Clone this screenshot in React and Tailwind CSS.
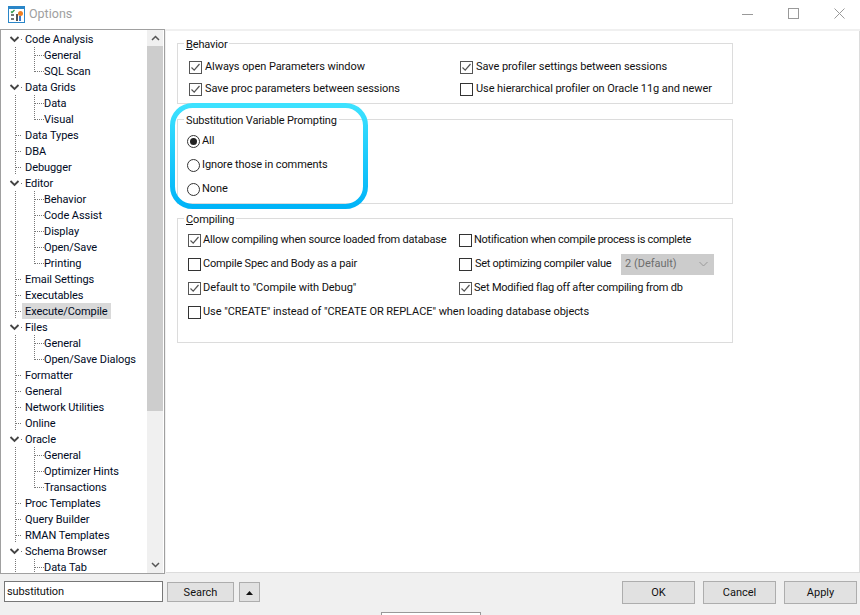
import React from 'react';

const font = { fontFamily: 'Roboto, sans-serif' };

// [label, level, flags] p = parent with chevron, l = last child of its parent
const tree = [
  ['Code Analysis', 0, 'p'],
  ['General', 1, ''],
  ['SQL Scan', 1, 'l'],
  ['Data Grids', 0, 'p'],
  ['Data', 1, ''],
  ['Visual', 1, 'l'],
  ['Data Types', 0, ''],
  ['DBA', 0, ''],
  ['Debugger', 0, ''],
  ['Editor', 0, 'p'],
  ['Behavior', 1, ''],
  ['Code Assist', 1, ''],
  ['Display', 1, ''],
  ['Open/Save', 1, ''],
  ['Printing', 1, 'l'],
  ['Email Settings', 0, ''],
  ['Executables', 0, ''],
  ['Execute/Compile', 0, 's'],
  ['Files', 0, 'p'],
  ['General', 1, ''],
  ['Open/Save Dialogs', 1, 'l'],
  ['Formatter', 0, ''],
  ['General', 0, ''],
  ['Network Utilities', 0, ''],
  ['Online', 0, ''],
  ['Oracle', 0, 'p'],
  ['General', 1, ''],
  ['Optimizer Hints', 1, ''],
  ['Transactions', 1, 'l'],
  ['Proc Templates', 0, ''],
  ['Query Builder', 0, ''],
  ['RMAN Templates', 0, ''],
  ['Schema Browser', 0, 'p'],
  ['Data Tab', 1, ''],
];

function TreeRow({ label, level, flags }) {
  const parent = flags.includes('p');
  const last = flags.includes('l');
  const selected = flags.includes('s');
  return (
    <div className="flex h-4 items-center">
      <svg width={level ? 43 : 21} height="16" className="shrink-0" shapeRendering="crispEdges">
        {!parent && <line x1="14.5" y1="0" x2="14.5" y2="16" stroke="#777" strokeDasharray="1 1" />}
        {level === 0 && !parent && <line x1="15" y1="8.5" x2="21" y2="8.5" stroke="#777" strokeDasharray="1 1" />}
        {parent && (
          <>
            <polyline points="9.5,6 13.5,10 17.5,6" fill="none" stroke="#444" strokeWidth="1.8" shapeRendering="auto" />
            <rect x="20" y="8" width="1" height="1" fill="#777" />
          </>
        )}
        {level === 1 && (
          <>
            <line x1="33.5" y1="0" x2="33.5" y2={last ? 9 : 16} stroke="#777" strokeDasharray="1 1" />
            <line x1="34" y1="8.5" x2="43" y2="8.5" stroke="#777" strokeDasharray="1 1" />
          </>
        )}
      </svg>
      <span className={`h-4 whitespace-nowrap text-[11px] leading-[18px] tracking-[-0.07px] text-[#000a1e] ${level ? '' : 'px-[3px]'} ${selected ? 'bg-[#d9d9d9]' : ''}`}>
        {label}
      </span>
    </div>
  );
}

function Scrollbar() {
  return (
    <div className="flex h-full w-[16px] shrink-0 flex-col bg-[#f0f0f0]">
      <div className="flex h-[16px] items-center justify-center">
        <svg width="9" height="6"><polyline points="1,5 4.5,1.5 8,5" fill="none" stroke="#555" strokeWidth="1.5" /></svg>
      </div>
      <div className="h-[365px] bg-[#cdcdcd]" />
      <div className="flex-1" />
      <div className="flex h-[16px] items-center justify-center">
        <svg width="9" height="6"><polyline points="1,1 4.5,4.5 8,1" fill="none" stroke="#555" strokeWidth="1.5" /></svg>
      </div>
    </div>
  );
}

function Check({ checked, label, className = '', labelClass = 'ml-[3px] tracking-[-0.07px]' }) {
  return (
    <div className={`flex h-[16px] items-center whitespace-nowrap text-[11px] text-[#111] ${className}`}>
      <span className={`flex h-[13px] w-[13px] shrink-0 items-center justify-center border bg-white ${checked ? 'border-[#555]' : 'border-[#333]'}`}>
        {checked && (
          <svg width="11" height="11" viewBox="0 0 11 11">
            <polyline points="1.5,5.5 4.2,8.2 9.5,2" fill="none" stroke="#555" strokeWidth="1.2" />
          </svg>
        )}
      </span>
      <span className={labelClass}>{label}</span>
    </div>
  );
}

function Radio({ checked, label }) {
  return (
    <div className="flex h-[16px] items-center gap-[2px] whitespace-nowrap text-[11px] tracking-[-0.1px] text-[#111]">
      <span className="flex h-[13px] w-[13px] shrink-0 items-center justify-center rounded-full border border-[#333] bg-white">
        {checked && <span className="h-[7px] w-[7px] rounded-full bg-[#222]" />}
      </span>
      <span>{label}</span>
    </div>
  );
}

function Group({ title, className = '', children }) {
  return (
    <div className={`relative w-[556px] border border-[#dcdcdc] ${className}`}>
      <span className="absolute left-[6px] top-[-6px] bg-white px-[2px] text-[11px] leading-[14px] tracking-[-0.15px] text-[#111]">
        {title}
      </span>
      {children}
    </div>
  );
}

function Button({ children, className = '' }) {
  return (
    <div className={`flex items-center justify-center border border-[#adadad] bg-[#e1e1e1] pt-[1px] text-[11px] text-[#111] ${className}`}>
      {children}
    </div>
  );
}

export default function App() {
  return (
    <div className="h-[615px] w-[860px] overflow-hidden bg-[#f0f0f0]" style={font}>
      {/* title bar */}
      <div className="flex h-[29px] items-center bg-white">
        <svg width="17" height="17" viewBox="0 0 17 17" className="mb-[1px] ml-[8px] shrink-0">
          <rect x="0.5" y="0.5" width="16" height="16" fill="#fff" stroke="#2a86c8" />
          <rect x="1" y="1" width="15" height="2" fill="#2a86c8" />
          <path d="M3 5.5l1 1 2.5-2.5" fill="none" stroke="#2c9c4a" strokeWidth="1.3" />
          <rect x="3" y="8" width="3" height="2" fill="#777" />
          <rect x="3" y="12" width="3" height="2" fill="#777" />
          <rect x="8" y="8" width="2" height="7" fill="#555" />
          <rect x="11" y="10" width="2" height="5" fill="#3d78c8" />
          <circle cx="12.5" cy="7.5" r="2.5" fill="#ee7f22" />
        </svg>
        <span className="ml-[4px] text-[12.5px] text-[#a0a0a0]">Options</span>
        <div className="mb-[2px] ml-auto flex items-center">
          <svg width="11" height="11" className="mr-[35px]"><line x1="0" y1="6.5" x2="11" y2="6.5" stroke="#999" /></svg>
          <svg width="11" height="11" className="mr-[35px]"><rect x="0.5" y="0.5" width="10" height="10" fill="none" stroke="#999" /></svg>
          <svg width="11" height="11" className="mr-[15px]"><path d="M0.5 0.5l10 10M10.5 0.5l-10 10" stroke="#999" fill="none" /></svg>
        </div>
      </div>

      <div className="flex h-[545px]">
        {/* options tree */}
        <div className="flex h-[545px] w-[165px] shrink-0 border border-[#a0a0a0] bg-white pl-0 pr-[1px]">
          <div className="h-full flex-1 overflow-hidden pt-[1px]">
            {tree.map(([label, level, flags], i) => (
              <TreeRow key={i} label={label} level={level} flags={flags} />
            ))}
          </div>
          <Scrollbar />
        </div>

        {/* settings page */}
        <div className="relative ml-[1px] mt-[2px] h-[542px] flex-1 border-b border-r border-[#dcdcdc] bg-white pl-[11px] pt-[12px]">
          <Group title={<><u>B</u>ehavior</>} className="h-[61px]">
            <div className="grid grid-cols-[271px_1fr] gap-y-[6px] pl-[11px] pt-[15px]">
              <Check checked label="Always open Parameters window" />
              <Check checked label="Save profiler settings between sessions" />
              <Check checked label="Save proc parameters between sessions" />
              <Check label="Use hierarchical profiler on Oracle 11g and newer" />
            </div>
          </Group>

          <Group title="Substitution Variable Prompting" className="mt-[15px] h-[85px]">
            <div className="flex flex-col gap-[8px] pl-[9px] pt-[13px]">
              <Radio checked label="All" />
              <Radio label="Ignore those in comments" />
              <Radio label="None" />
            </div>
          </Group>

          <Group title={<><u>C</u>ompiling</>} className="mt-[14px] h-[125px]">
            <div className="grid grid-cols-[271px_1fr] grid-rows-[16px_16px_16px_16px] gap-y-[8px] pl-[10px] pt-[13px]">
              <Check checked label="Allow compiling when source loaded from database" labelClass="ml-[2px] tracking-[-0.2px]" />
              <Check label="Notification when compile process is complete" labelClass="ml-[2px] tracking-[-0.27px]" />
              <Check label="Compile Spec and Body as a pair" labelClass="ml-[2px] tracking-[-0.2px]" />
              <div className="flex h-[16px] items-center">
                <Check label="Set optimizing compiler value" className="w-[162px]" labelClass="ml-[3px] tracking-[-0.27px]" />
                <div className="flex h-[21px] w-[93px] shrink-0 items-center justify-between bg-[#cccccc] px-[4px] text-[11px] text-[#6d6d6d]">
                  <span>2 (Default)</span>
                  <svg width="9" height="6" className="mr-[2px]"><polyline points="0.5,1 4.5,5 8.5,1" fill="none" stroke="#999" /></svg>
                </div>
              </div>
              <Check checked label={'Default to "Compile with Debug"'} labelClass="ml-[2px] tracking-[-0.07px]" />
              <Check checked label="Set Modified flag off after compiling from db" labelClass="ml-[2px] tracking-[-0.2px]" />
              <Check className="col-span-2" label={'Use "CREATE" instead of "CREATE OR REPLACE" when loading database objects'} labelClass="ml-[2px] tracking-[-0.05px]" />
            </div>
          </Group>

          {/* annotation drawn over the screenshot */}
          <svg width="198" height="106" className="absolute left-[4px] top-[72px]">
            <defs>
              <linearGradient id="ring" x1="0" y1="0" x2="0" y2="1">
                <stop offset="0" stopColor="#3de2ff" />
                <stop offset="1" stopColor="#00b4f8" />
              </linearGradient>
            </defs>
            <rect x="2.5" y="2.5" width="193" height="101" rx="20" fill="none" stroke="url(#ring)" strokeWidth="5" />
          </svg>
        </div>
      </div>

      {/* bottom bar */}
      <div className="relative flex items-start pl-[4px] pt-[7px]">
        <div className="flex h-[21px] w-[159px] items-center border border-[#777] bg-white pl-[2px] pt-[1px] text-[11px] tracking-[-0.1px] text-[#111]">substitution</div>
        <Button className="ml-[4px] mt-[1px] h-[20px] w-[67px]"><span className="mt-[2px]">Search</span></Button>
        <Button className="ml-[5px] mt-[1px] h-[20px] w-[21px]">
          <svg width="7" height="4"><path d="M3.5 0L7 4H0z" fill="#111" /></svg>
        </Button>
        <div className="ml-auto mr-[3px] flex gap-[8px]">
          <Button className="h-[23px] w-[73px]">OK</Button>
          <Button className="h-[23px] w-[73px]">Cancel</Button>
          <Button className="h-[23px] w-[73px]">Apply</Button>
        </div>
        <div className="absolute left-[381px] top-[38px] h-[10px] w-[100px] border border-[#999] bg-white" />
      </div>
    </div>
  );
}
